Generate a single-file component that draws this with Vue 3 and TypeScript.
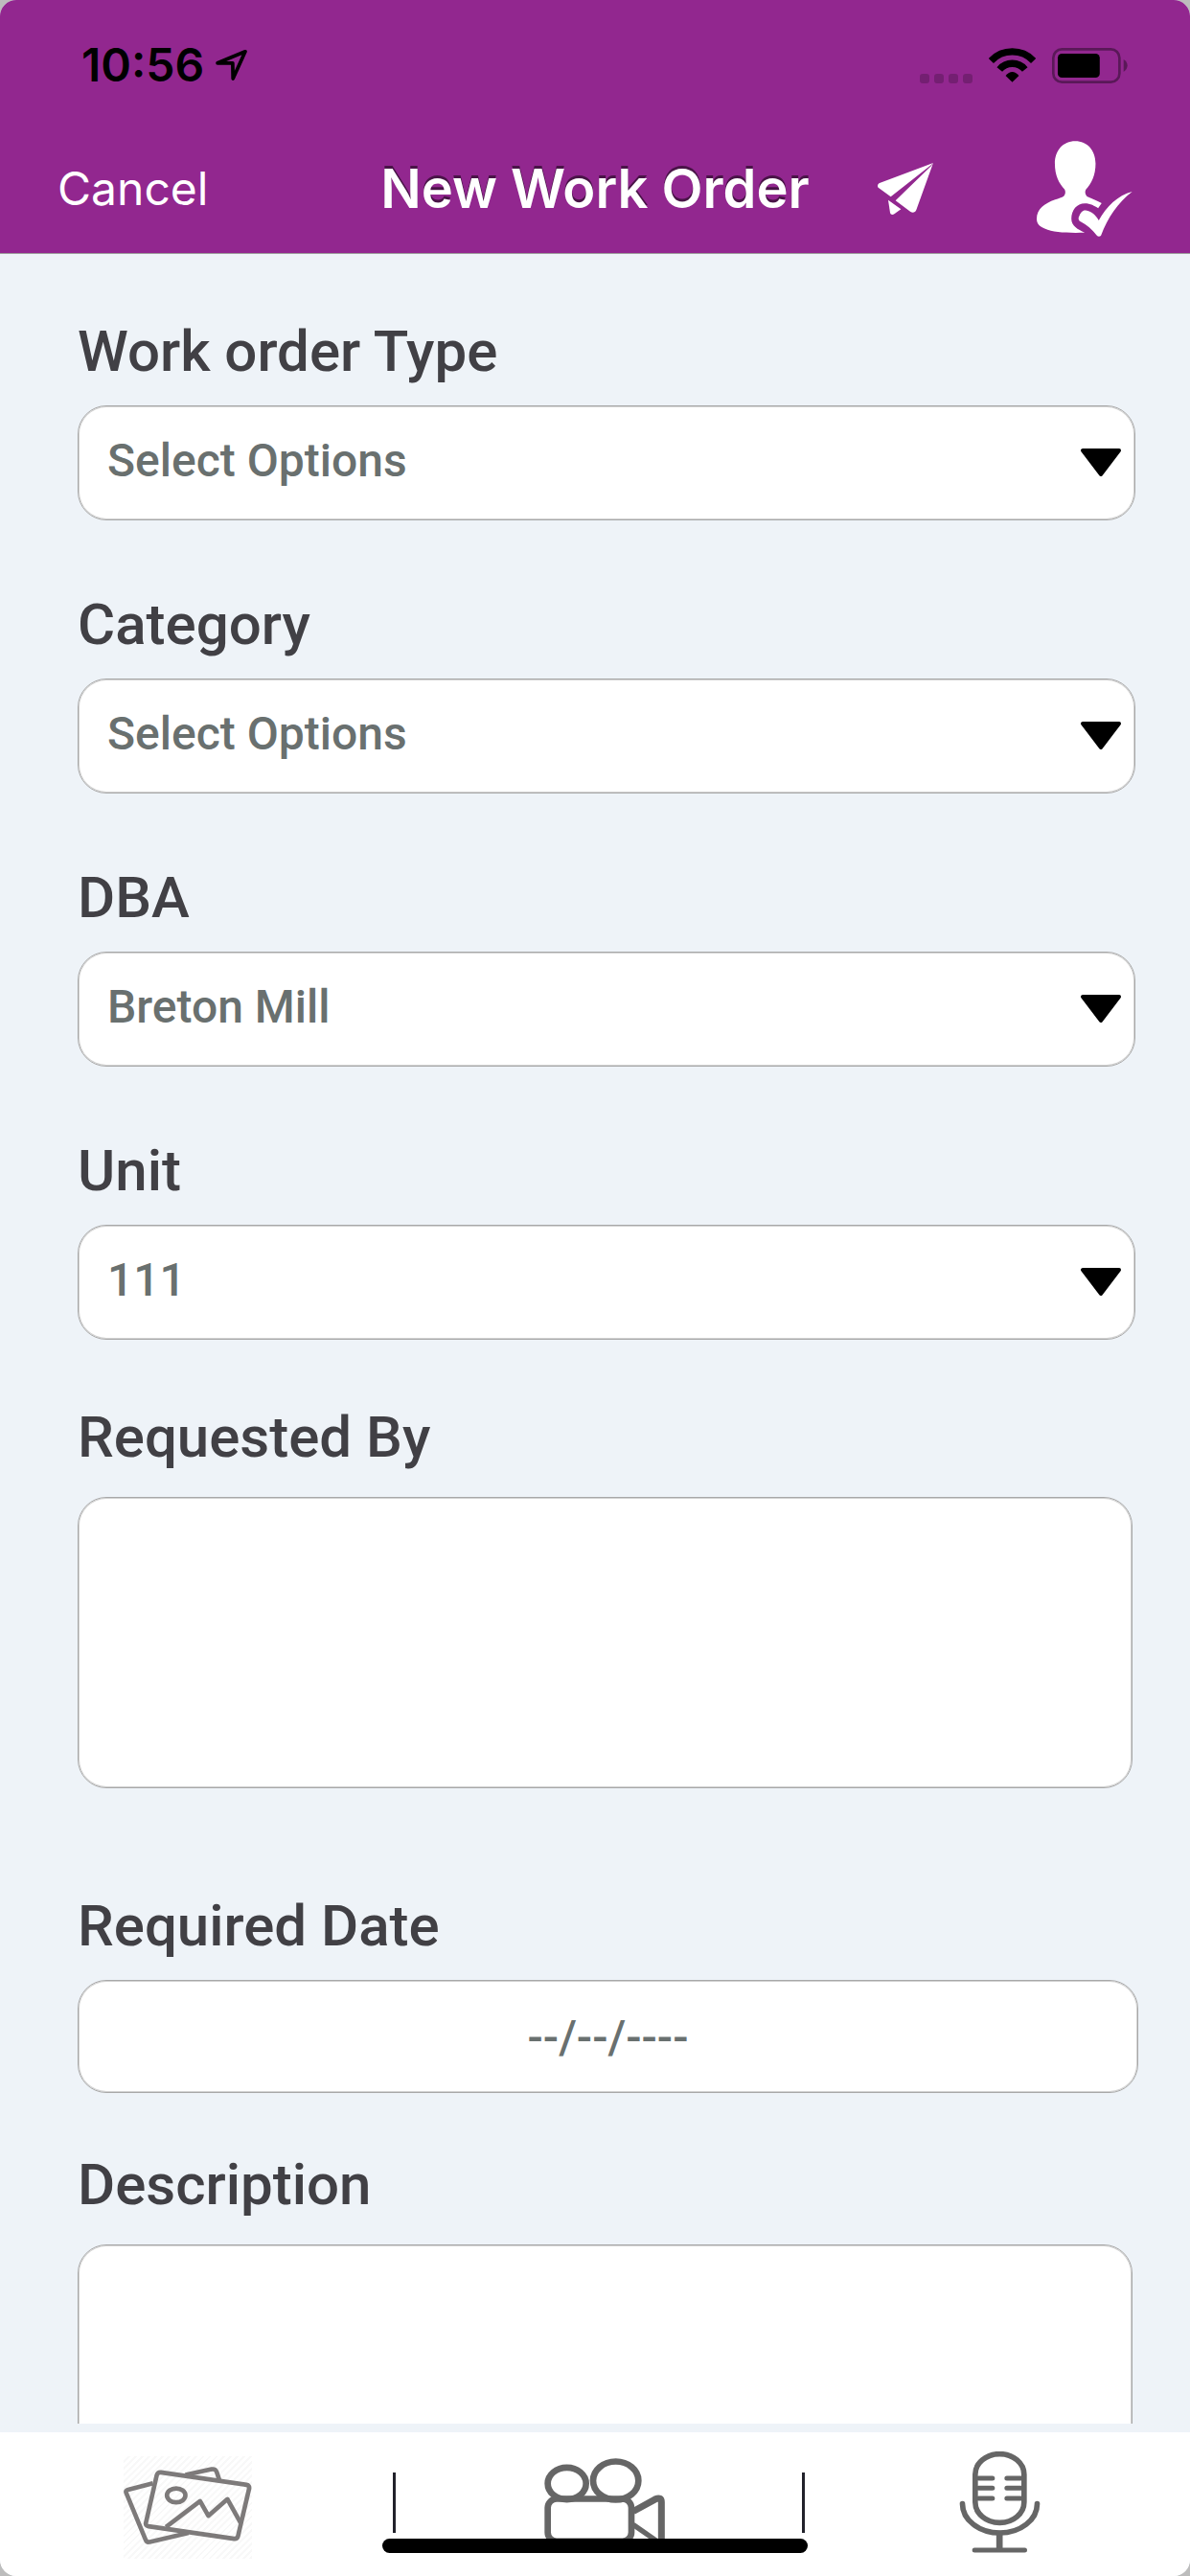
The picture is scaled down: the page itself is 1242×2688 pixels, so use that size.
<script setup lang="ts">
import { reactive } from 'vue'

interface SelectField {
  id: string
  label: string
  options: string[]
}

const selectFields: SelectField[] = [
  { id: 'type', label: 'Work order Type', options: ['Select Options'] },
  { id: 'category', label: 'Category', options: ['Select Options'] },
  { id: 'dba', label: 'DBA', options: ['Breton Mill'] },
  { id: 'unit', label: 'Unit', options: ['111'] },
]

const form = reactive<Record<string, string>>({
  type: 'Select Options',
  category: 'Select Options',
  dba: 'Breton Mill',
  unit: '111',
  requestedBy: '',
  requiredDate: '--/--/----',
  description: '',
})
</script>

<template>
  <div class="screen">
    <header class="top">
      <div class="status">
        <div class="status-left">
          <span class="time">10:56</span>
          <svg class="location" viewBox="674 156 98 95" aria-hidden="true">
            <path d="M680 197 766 161 728 245 727 197Z" fill="none" stroke="#000" stroke-width="11" stroke-linejoin="round" />
          </svg>
        </div>
        <div class="status-right">
          <div class="dots"><i v-for="n in 4" :key="n"></i></div>
          <svg class="wifi" viewBox="396 148 148 107" aria-hidden="true">
            <path d="M403 188A92 92 0 0 1 537 188" fill="none" stroke="#000" stroke-width="22" />
            <path d="M430 215A52 52 0 0 1 510 215" fill="none" stroke="#000" stroke-width="22" />
            <path d="M470 255 449 235Q470 211 491 235Z" />
          </svg>
          <svg class="battery" viewBox="594 147 238 111" aria-hidden="true">
            <rect x="598" y="151" width="208" height="103" rx="27" fill="none" stroke="#000" stroke-opacity=".38" stroke-width="8" />
            <rect x="612" y="165" width="132" height="75" rx="13" />
            <path d="M819 183Q831 190 831 202 831 215 819 222Z" fill-opacity=".38" />
          </svg>
        </div>
      </div>
      <nav class="nav">
        <button type="button" class="cancel">Cancel</button>
        <h1>New Work Order</h1>
        <div class="actions">
          <button type="button" aria-label="Send">
            <svg class="plane" viewBox="45 510 174 162" fill="#fff">
              <path d="M219 510 51 573C44 576 43 585 49 589L86 616 212 517Z" />
              <path d="M219 510 213 519 101 628 148 663C155 668 163 665 166 657Z" />
              <path d="M78 626 118 655 97 670C91 674 85 671 84 666Z" />
            </svg>
          </button>
          <button type="button" aria-label="Assign person">
            <svg class="person" viewBox="546 441 301 300" fill="#fff">
              <path d="M667 441C705 441 731 470 731 512 731 548 718 575 700 594 697 601 698 609 704 615 720 623 737 628 750 636L739 652C728 645 715 637 697 637 672 637 655 658 655 685 655 708 675 718 697 729 640 730 600 729 571 716 553 708 546 700 546 685 546 655 570 637 604 625 615 621 625 618 631 614 637 608 637 600 634 593 616 575 603 548 603 512 603 470 629 441 667 441Z" />
              <path d="M700 659C718 661 732 675 741 690 765 647 800 612 846 600 800 636 770 680 748 738 745 742 738 742 735 738 720 718 703 704 684 694 676 690 676 682 680 676 684 666 690 658 700 659Z" />
            </svg>
          </button>
        </div>
      </nav>
    </header>

    <main class="form">
      <div v-for="f in selectFields" :key="f.id" class="field">
        <label :for="f.id">{{ f.label }}</label>
        <div class="select">
          <select :id="f.id" v-model="form[f.id]" class="box">
            <option v-for="o in f.options" :key="o">{{ o }}</option>
          </select>
          <svg class="caret" viewBox="0 0 42 29" aria-hidden="true">
            <path d="M2 2H40L21 27Z" stroke="#000" stroke-width="4" stroke-linejoin="round" />
          </svg>
        </div>
      </div>
      <div class="field note">
        <label for="requested">Requested By</label>
        <textarea id="requested" v-model="form.requestedBy" class="box"></textarea>
      </div>
      <div class="field date">
        <label for="required">Required Date</label>
        <input id="required" v-model="form.requiredDate" type="text" class="box" />
      </div>
      <div class="field note">
        <label for="description">Description</label>
        <textarea id="description" v-model="form.description" class="box"></textarea>
      </div>
    </main>

    <footer class="bar">
      <button type="button" class="gallery" aria-label="Add photo">
        <svg viewBox="386 189 403 320" fill="none" stroke="#7d7a7a" stroke-width="14" stroke-linejoin="round">
          <path d="M478 273 400 293Q391 296 394 303L455 450Q459 460 468 457L590 429" />
          <path d="M580 247 662 229Q674 227 678 237L687 264" />
          <path d="M503 239 772 278Q782 280 780 290L745 439Q742 448 733 447L464 408Q454 406 456 397L490 248Q493 238 503 239Z" />
          <ellipse cx="551" cy="311" rx="29" ry="22" />
          <path d="M519 410 626 329 652 375 712 323 753 397" />
        </svg>
      </button>
      <span class="divider"></span>
      <button type="button" class="video" aria-label="Add video">
        <svg viewBox="564 195 378 275" fill="none" stroke="#666" stroke-width="20">
          <ellipse cx="635" cy="274" rx="60" ry="50" />
          <ellipse cx="788" cy="265" rx="71" ry="60" />
          <rect x="575" y="322" width="262" height="133" rx="28" />
          <path d="M843 361 912 323Q931 315 931 332V470" stroke-width="21" stroke-linejoin="round" />
          <path d="M843 403 931 464" stroke-width="16" />
        </svg>
      </button>
      <span class="divider"></span>
      <button type="button" class="voice" aria-label="Record voice note">
        <svg viewBox="543 174 254 318" fill="none" stroke="#666" stroke-width="17" stroke-linecap="round">
          <rect x="593" y="182" width="153" height="215" rx="76" ry="64" />
          <path d="M604 258H647M604 289H647M604 321H647M692 258H735M692 289H735M692 321H735M591 483H748" stroke-width="15" />
          <path d="M553 338A117 91 0 0 0 787 338" />
          <path d="M669 432V478" stroke-width="20" />
        </svg>
      </button>
      <span class="home"></span>
    </footer>
  </div>
</template>

<style>
body {
  margin: 0;
  background: #bdbdbd;
}
</style>

<style scoped>
* {
  box-sizing: border-box;
}
.screen {
  display: flex;
  flex-direction: column;
  height: 100vh;
  overflow: hidden;
  border-radius: 17px;
  background: #eef3f8;
  font-family: Roboto, "Liberation Sans", sans-serif;
}
button {
  padding: 0;
  border: 0;
  background: none;
}
svg {
  display: block;
}

.top {
  flex: none;
  background: #92278f;
  border-bottom: 1px solid #9b9b9b;
  font-family: Inter, "Liberation Sans", sans-serif;
}
.status {
  display: flex;
  justify-content: space-between;
  align-items: center;
  height: 136px;
  padding: 0 65px 0 85px;
}
.status-left,
.status-right {
  display: flex;
  align-items: center;
}
.status-left {
  gap: 12px;
}
.time {
  font-size: 48px;
  font-weight: 600;
  line-height: 56px;
}
.location {
  width: 33px;
  height: 32px;
}
.dots {
  display: flex;
  align-self: flex-end;
  gap: 5px;
  margin-right: 17px;
}
.dots i {
  width: 10px;
  height: 10px;
  border-radius: 3px;
  background: rgba(0, 0, 0, 0.2);
}
.wifi {
  width: 49px;
  height: 36px;
  margin-right: 17px;
}
.battery {
  width: 79px;
  height: 37px;
}
.nav {
  display: grid;
  grid-template-columns: 1fr auto 1fr;
  align-items: center;
  height: 128px;
  padding: 0 60px 6px;
  color: #fff;
}
.cancel {
  justify-self: start;
  color: #fff;
  font-family: inherit;
  font-size: 48px;
  line-height: 60px;
}
h1 {
  margin: 0;
  font-size: 56px;
  font-weight: 600;
  line-height: 70px;
  text-shadow: 0 -3px 0 rgba(0, 0, 0, 0.5);
  white-space: nowrap;
}
.actions {
  display: flex;
  justify-content: space-between;
  align-items: center;
  padding-left: 71px;
}
.plane {
  width: 58px;
  height: 54px;
}
.person {
  width: 100px;
  height: 100px;
}

.form {
  flex: 1;
  min-height: 0;
  margin-bottom: 9px;
  padding: 67px 54px 0 81px;
  overflow-y: auto;
  scrollbar-width: none;
}
.field {
  display: flex;
  flex-direction: column;
  gap: 21px;
  margin: 0 3px 74px 0;
}
.field label {
  color: #414045;
  font-size: 60px;
  font-weight: 500;
  line-height: 70px;
}
.box {
  display: block;
  width: 100%;
  height: 120px;
  margin: 0;
  padding: 0 30px 6px;
  border: 1px solid #a8a8a8;
  border-radius: 30px;
  outline: 0;
  background: #fff;
  box-shadow: inset 0 0 0 1px #d2d2d2;
  color: #69706f;
  font-family: inherit;
  font-size: 48px;
  font-weight: 500;
  appearance: none;
  resize: none;
}
.select {
  position: relative;
}
.caret {
  position: absolute;
  top: 45px;
  right: 15px;
  width: 42px;
  height: 29px;
  pointer-events: none;
}
.note {
  gap: 27px;
  margin: -7px 6px 109px 0;
}
.note .box {
  height: 304px;
}
.date {
  margin: 0 0 68px;
}
.date .box {
  height: 118px;
  padding: 0 30px;
  text-align: center;
}

.bar {
  position: relative;
  flex: none;
  display: grid;
  grid-template-columns: 410fr 3px 424fr 3px 402fr;
  justify-items: center;
  align-items: start;
  height: 150px;
  background: #fff;
}
.divider {
  width: 3px;
  height: 63px;
  margin-top: 42px;
  background: #22222b;
}
.gallery {
  padding: 25px 18px 0 0;
}
.gallery svg {
  width: 134px;
  height: 107px;
  background: repeating-linear-gradient(135deg, #fff 0 3px, #f8f8f8 3px 5px);
}
.video {
  padding: 27px 0 0 12px;
}
.video svg {
  width: 126px;
  height: 92px;
}
.voice {
  padding: 20px 0 0 4px;
}
.voice svg {
  width: 85px;
  height: 106px;
}
.home {
  position: absolute;
  bottom: 24px;
  left: 50%;
  width: 444px;
  height: 15px;
  border-radius: 8px;
  background: #000;
  transform: translateX(-50%);
}
</style>
